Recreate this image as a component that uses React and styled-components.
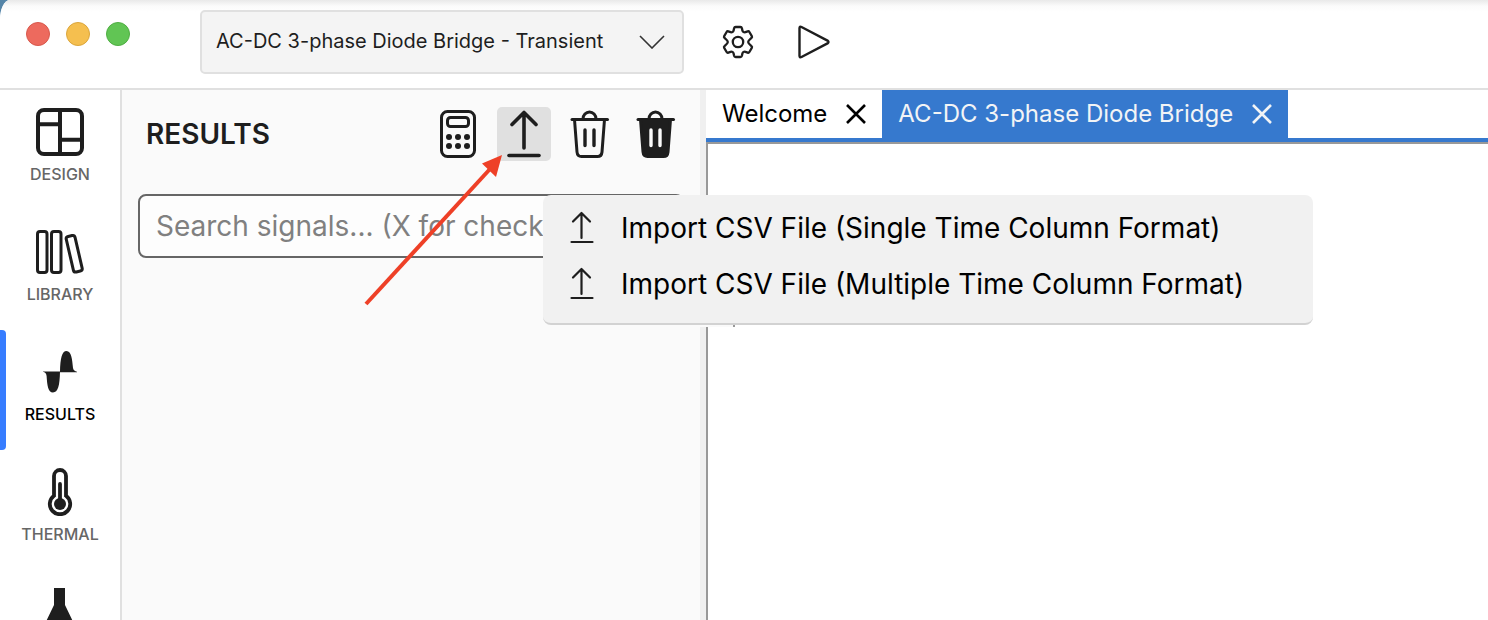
import React, { useState } from "react";
import styled, { createGlobalStyle } from "styled-components";

const GlobalStyle = createGlobalStyle`
  * {
    box-sizing: border-box;
  }
  body {
    margin: 0;
    background: #5585a8;
    font-family: "Inter", "Liberation Sans", sans-serif;
    color: #1e1e1e;
  }
  button,
  input,
  select {
    font-family: inherit;
    color: inherit;
  }
`;

const Window = styled.div`
  display: flex;
  flex-direction: column;
  height: 100vh;
  overflow: hidden;
  background: #fff;
  border-top-left-radius: 10px 20px;
`;

const Header = styled.header`
  display: flex;
  align-items: flex-start;
  padding: 10px 26px 14px;
  border-bottom: 2px solid #e0e0e0;
  background: linear-gradient(#e9e9e9, #fbfbfb 6px, #fff 12px);
`;

const TrafficLights = styled.div`
  display: flex;
  gap: 16px;
  padding-top: 12px;
  margin-right: 70px;
`;

const Light = styled.span`
  width: 24px;
  height: 24px;
  border-radius: 50%;
  background: ${({ $color }) => $color};
  border: 1px solid ${({ $edge }) => $edge};
`;

const SelectWrap = styled.label`
  display: grid;
  align-items: center;
  width: 484px;

  > * {
    grid-area: 1 / 1;
  }
  svg {
    justify-self: end;
    margin-right: 19px;
    pointer-events: none;
  }
`;

const Select = styled.select`
  appearance: none;
  width: 100%;
  height: 64px;
  padding: 0 60px 2px 14px;
  border: 2px solid #e0e0e0;
  border-radius: 5px;
  background: #f4f4f4;
  font-size: 20px;
`;

const HeaderActions = styled.div`
  display: flex;
  align-items: center;
  gap: 28px;
  height: 64px;
  margin-left: 30px;
`;

const IconButton = styled.button`
  display: flex;
  align-items: center;
  justify-content: center;
  width: ${({ $size }) => $size}px;
  height: ${({ $size }) => $size}px;
  padding: 0;
  border: 0;
  border-radius: 5px;
  background: ${({ $active }) => ($active ? "#e0e0e0" : "transparent")};
  cursor: pointer;
`;

const Body = styled.div`
  display: flex;
  flex: 1;
  min-height: 0;
`;

const Nav = styled.nav`
  flex: none;
  width: 122px;
  border-right: 2px solid #e0e0e0;
  overflow: hidden;
`;

const NavItem = styled.a`
  position: relative;
  display: flex;
  flex-direction: column;
  align-items: center;
  gap: 8px;
  height: 120px;
  padding-top: 18px;
  color: ${({ $active }) => ($active ? "#000" : "#666")};
  font-size: 16px;
  font-weight: 500;
  line-height: 20px;
  text-decoration: none;

  &::before {
    content: "";
    position: absolute;
    inset: 0 auto 0 0;
    width: 6px;
    border-radius: 0 4px 4px 0;
    background: ${({ $active }) => ($active ? "#377dff" : "transparent")};
  }
`;

const Panel = styled.section`
  flex: none;
  width: 584px;
  padding: 17px 16px;
  background: #fafafa;
  border-right: 6px solid #f0f0f0;
`;

const PanelHeader = styled.div`
  display: flex;
  align-items: center;
  justify-content: space-between;
  padding: 0 1px 0 8px;
`;

const PanelTitle = styled.h1`
  margin: 0;
  font-size: 28px;
  font-weight: 600;
`;

const Toolbar = styled.div`
  display: flex;
  gap: 12px;
`;

const MenuAnchor = styled.div`
  position: relative;
`;

const Pointer = styled.svg`
  position: absolute;
  top: 47px;
  left: -135px;
  z-index: 1;
  pointer-events: none;
`;

const Menu = styled.div`
  position: absolute;
  top: 88px;
  left: 46px;
  z-index: 2;
  width: 770px;
  padding: 5px 0 11px;
  border-radius: 8px;
  border-bottom: 2px solid #d2d2d2;
  background: #f1f1f1;

  &::after {
    content: "";
    position: absolute;
    bottom: -4px;
    left: 8px;
    width: 182px;
    height: 2px;
    border-right: 2px solid #999;
    background: #fafafa;
  }
`;

const MenuItem = styled.button`
  display: flex;
  align-items: center;
  gap: 24px;
  width: 100%;
  height: 56px;
  padding: 0 22px;
  border: 0;
  background: none;
  color: #000;
  font-size: 28px;
  text-align: left;
  white-space: nowrap;
  cursor: pointer;
`;

const Search = styled.input`
  display: block;
  width: 100%;
  height: 64px;
  margin-top: 33px;
  padding: 0 16px;
  border: 2px solid #666;
  border-radius: 8px;
  background: #fdfdfd;
  font-size: 28px;

  &::placeholder {
    color: #808080;
    opacity: 1;
  }
`;

const Editor = styled.main`
  display: flex;
  flex: 1;
  flex-direction: column;
  min-width: 0;
`;

const Tabs = styled.div`
  display: flex;
  border-bottom: 4px solid #3679ce;
`;

const Tab = styled.div`
  display: flex;
  align-items: center;
  gap: 15px;
  height: 48px;
  padding: 0 12px 0 16px;
  background: ${({ $active }) => ($active ? "#3679ce" : "#fff")};
  color: ${({ $active }) => ($active ? "#f2f4f6" : "#000")};
`;

const TabLabel = styled.button`
  padding: 0 0 2px;
  border: 0;
  background: none;
  font-size: 24px;
  white-space: nowrap;
  cursor: pointer;
`;

const TabClose = styled(IconButton)`
  border-radius: 0;
`;

const Canvas = styled.div`
  flex: 1;
  border-top: 2px solid #999;
  border-left: 2px solid #999;
`;

const DesignIcon = () => (
  <svg width="48" height="48" viewBox="0 0 48 48" fill="none" stroke="#1e1e1e" strokeWidth="4">
    <rect x="2" y="2" width="44" height="44" rx="6" />
    <path d="M24 2v44M2 16.3h22M24 31.8h22" />
  </svg>
);

const LibraryIcon = () => (
  <svg width="48" height="48" viewBox="0 0 48 48" fill="none" stroke="#1e1e1e" strokeWidth="3">
    <rect x="1.5" y="3.5" width="9.5" height="41" rx="2.5" />
    <rect x="15.5" y="3.5" width="9.5" height="41" rx="2.5" />
    <rect x="33.7" y="7.5" width="9" height="36.5" rx="2.5" transform="rotate(-13 38.2 25.7)" />
  </svg>
);

const ResultsIcon = () => (
  <svg width="48" height="48" viewBox="0 0 48 48" fill="#1e1e1e">
    <path d="M24 24C24.3 10 26 3 30.5 3C35.5 3 36.3 12 37 20C37.3 22.4 39 23.2 41 23.8V24.3H24Z" />
    <path d="M24 23.6C23.7 38 22 44.5 17 44.5C12 44.5 11.2 37 10.6 28C10.3 25.2 9 24.3 7 23.8V23.5Z" />
  </svg>
);

const ThermalIcon = () => (
  <svg width="48" height="48" viewBox="0 0 48 48" fill="none" stroke="#1e1e1e" strokeWidth="3.8">
    <path d="M18 27.8V8a6 6 0 0 1 12 0v19.8a10.2 10.2 0 1 1-12 0Z" />
    <path d="M24 16v20" strokeLinecap="round" />
    <circle cx="24" cy="36" r="6" fill="#1e1e1e" stroke="none" />
  </svg>
);

const FlaskIcon = () => (
  <svg width="48" height="48" viewBox="0 0 48 48" fill="#1e1e1e">
    <path d="M18 0h11v17l13 27q1 4-3 4H8q-4 0-3-4l13-27Z" />
  </svg>
);

const GearIcon = () => (
  <svg width="34" height="34" viewBox="0 0 34 34" fill="none" stroke="#1e1e1e" strokeWidth="2.3" strokeLinejoin="round">
    <path d="M14.6 2h4.8q1.2 0 1.5 1.200l.5 2.300q.2 1 1.100 1.500t1.900.2l2.300-.8q1.100-.4 1.700.6l2.400 4.100q.6 1-.3 1.800l-1.700 1.600q-1.600 1.500-1.600 2.500t1.600 2.500l1.700 1.600q.9.800.3 1.800l-2.400 4.100q-.6 1-1.700.6l-2.300-.8q-1-.3-1.900.2t-1.100 1.500l-.5 2.300q-.3 1.200-1.500 1.200h-4.800q-1.200 0-1.500-1.200l-.5-2.300q-.2-1-1.100-1.500t-1.900-.2l-2.300.8q-1.100.4-1.700-.6l-2.400-4.100q-.6-1 .3-1.800l1.700-1.600q1.600-1.500 1.600-2.500t-1.600-2.500l-1.700-1.600q-.9-.8-.3-1.800l2.400-4.100q.6-1 1.700-.6l2.300.8q1 .3 1.900-.2t1.100-1.500l.5-2.300q.3-1.200 1.500-1.200Z" />
    <circle cx="17" cy="17" r="5.2" />
  </svg>
);

const PlayIcon = () => (
  <svg width="34" height="34" viewBox="0 0 34 34" fill="none" stroke="#1e1e1e" strokeWidth="2.4" strokeLinejoin="round">
    <path d="M2.5 3.2Q2.5 1 4.5 2L30.5 15.6Q32.5 17 30.5 18.4L4.5 32Q2.5 33 2.5 30.8Z" />
  </svg>
);

const ChevronIcon = () => (
  <svg width="26" height="14" viewBox="0 0 26 14" fill="none" stroke="#333" strokeWidth="1.6">
    <path d="M1 1l12 12L25 1" />
  </svg>
);

const CalculatorIcon = () => (
  <svg width="36" height="48" viewBox="0 0 36 48" fill="none" stroke="#1e1e1e" strokeWidth="3">
    <rect x="1.5" y="1.5" width="33" height="45" rx="6" />
    <rect x="7.5" y="7.5" width="21" height="9" rx="3" />
    <g fill="#1e1e1e" stroke="none">
      {[27, 36].map((y) =>
        [9, 18, 27].map((x) => <circle key={`${x}-${y}`} cx={x} cy={y} r="3" />)
      )}
    </g>
  </svg>
);

const UploadIcon = () => (
  <svg width="34" height="48" viewBox="0 0 34 48" fill="none" stroke="#1e1e1e" strokeWidth="3.6" strokeLinecap="round" strokeLinejoin="round">
    <path d="M17 38V2.5M5 14.5l12-12 12 12" />
    <path d="M2 45.5h30" />
  </svg>
);

const ImportIcon = () => (
  <svg width="32" height="34" viewBox="0 0 32 34" fill="none" stroke="#1e1e1e" strokeWidth="2.2" strokeLinecap="round" strokeLinejoin="round">
    <path d="M16.5 27V2M8 10.5L16.5 2 25 10.5" />
    <path d="M6.5 31h21" />
  </svg>
);

const TrashIcon = ({ filled }) => (
  <svg width="40" height="48" viewBox="0 0 40 48" fill="none" stroke="#1e1e1e" strokeWidth="3" strokeLinecap="round" strokeLinejoin="round">
    <path d="M13 9a6.5 7 0 0 1 13 0" />
    <path d="M2 9.5h35.500" />
    <path
      d="M4.5 9.5L7 42q.4 4.5 4.5 4.5h16q4.1 0 4.5-4.5L34.5 9.5"
      fill={filled ? "#1e1e1e" : "none"}
    />
    <path d="M15 20v15.5M24 20v15.5" stroke={filled ? "#fafafa" : "#1e1e1e"} strokeWidth="3.4" />
  </svg>
);

const CloseIcon = () => (
  <svg width="20" height="20" viewBox="0 0 20 20" fill="none" stroke="currentColor" strokeWidth="2.6">
    <path d="M1 1l18 18M19 1L1 19" />
  </svg>
);

const navItems = [
  { id: "design", label: "DESIGN", icon: DesignIcon },
  { id: "library", label: "LIBRARY", icon: LibraryIcon },
  { id: "results", label: "RESULTS", icon: ResultsIcon },
  { id: "thermal", label: "THERMAL", icon: ThermalIcon },
  { id: "lab", label: "", icon: FlaskIcon },
];

const menuItems = [
  "Import CSV File (Single Time Column Format)",
  "Import CSV File (Multiple Time Column Format)",
];

const App = () => {
  const [section, setSection] = useState("results");
  const [tab, setTab] = useState("AC-DC 3-phase Diode Bridge");
  const [menuOpen, setMenuOpen] = useState(true);

  return (
    <>
      <GlobalStyle />
      <Window>
        <Header>
          <TrafficLights>
            <Light $color="#ed6a5e" $edge="#d8584c" />
            <Light $color="#f5bf4f" $edge="#dba63c" />
            <Light $color="#61c554" $edge="#4fae42" />
          </TrafficLights>
          <SelectWrap>
            <Select aria-label="Simulation">
              <option>AC-DC 3-phase Diode Bridge - Transient</option>
            </Select>
            <ChevronIcon />
          </SelectWrap>
          <HeaderActions>
            <IconButton $size={48} aria-label="Settings">
              <GearIcon />
            </IconButton>
            <IconButton $size={48} aria-label="Run">
              <PlayIcon />
            </IconButton>
          </HeaderActions>
        </Header>

        <Body>
          <Nav>
            {navItems.map(({ id, label, icon: Icon }) => (
              <NavItem
                key={id}
                href={`#${id}`}
                aria-label={label || id}
                $active={section === id}
                onClick={() => setSection(id)}
              >
                <Icon />
                {label}
              </NavItem>
            ))}
          </Nav>

          <Panel>
            <PanelHeader>
              <PanelTitle>RESULTS</PanelTitle>
              <Toolbar>
                <IconButton $size={54} aria-label="Calculator">
                  <CalculatorIcon />
                </IconButton>
                <MenuAnchor>
                  <IconButton
                    $size={54}
                    $active={menuOpen}
                    aria-label="Import"
                    onClick={() => setMenuOpen(!menuOpen)}
                  >
                    <UploadIcon />
                  </IconButton>
                  <Pointer width="144" height="152" viewBox="0 0 144 152">
                    <path d="M4 150L128 15" stroke="#ee4027" strokeWidth="4" />
                    <path d="M140 1L134 23L120 9.5Z" fill="#ee4027" />
                  </Pointer>
                  {menuOpen && (
                    <Menu>
                      {menuItems.map((item) => (
                        <MenuItem key={item}>
                          <ImportIcon />
                          {item}
                        </MenuItem>
                      ))}
                    </Menu>
                  )}
                </MenuAnchor>
                <IconButton $size={54} aria-label="Delete selected">
                  <TrashIcon />
                </IconButton>
                <IconButton $size={54} aria-label="Delete all">
                  <TrashIcon filled />
                </IconButton>
              </Toolbar>
            </PanelHeader>
            <Search
              type="text"
              aria-label="Search signals"
              placeholder="Search signals... (X for checked)"
            />
          </Panel>

          <Editor>
            <Tabs>
              {["Welcome", "AC-DC 3-phase Diode Bridge"].map((name) => (
                <Tab key={name} $active={tab === name}>
                  <TabLabel onClick={() => setTab(name)}>{name}</TabLabel>
                  <TabClose $size={28} aria-label={`Close ${name}`}>
                    <CloseIcon />
                  </TabClose>
                </Tab>
              ))}
            </Tabs>
            <Canvas />
          </Editor>
        </Body>
      </Window>
    </>
  );
};

export default App;
